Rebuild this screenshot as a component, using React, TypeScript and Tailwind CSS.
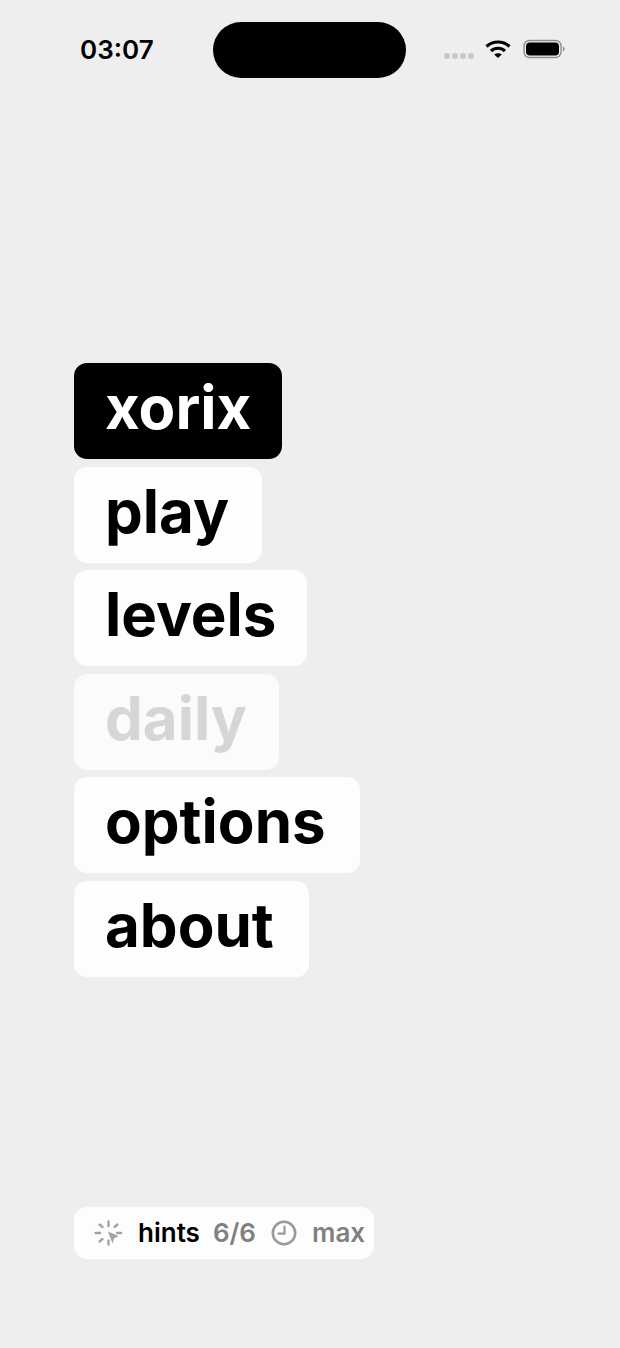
import React from 'react';

const items = [
  { label: 'xorix', width: 'w-[208px]', box: 'bg-black', text: 'text-white' },
  { label: 'play', width: 'w-[188px]', box: 'bg-[#fdfdfd]', text: 'text-black' },
  { label: 'levels', width: 'w-[233px]', box: 'bg-[#fdfdfd]', text: 'text-black' },
  { label: 'daily', width: 'w-[205px]', box: 'bg-[#fbfbfb]', text: 'text-[#d6d6d6]' },
  { label: 'options', width: 'w-[286px]', box: 'bg-[#fdfdfd]', text: 'text-black' },
  { label: 'about', width: 'w-[235px]', box: 'bg-[#fdfdfd]', text: 'text-black' },
];

const Wifi = () => (
  <svg width="26" height="20" viewBox="0 0 26 20" fill="none" stroke="#000" strokeWidth="3.2">
    <path d="M1.5 7.5C8 1.5 18 1.5 24.5 7.5" />
    <path d="M6 12C10 8.3 16 8.3 20 12" />
    <path d="M9.2 15.6L13 19L16.8 15.6C14.6 13.8 11.4 13.8 9.2 15.6Z" fill="#000" stroke="none" />
  </svg>
);

const Battery = () => (
  <svg width="42" height="20" viewBox="0 0 42 20" fill="none">
    <rect x="1" y="1.5" width="37" height="17" rx="5.5" stroke="#8e8e8e" strokeWidth="1.4" />
    <rect x="3" y="3.5" width="33" height="13" rx="3.8" fill="#000" />
    <path d="M39.8 7.5C41 8 41.6 9 41.6 10C41.6 11 41 12 39.8 12.5Z" fill="#8e8e8e" />
  </svg>
);

// hint icon, rays around a cursor arrow
const HintIcon = () => (
  <svg width="29" height="28" viewBox="0 0 29 28" fill="none" stroke="#a3a3a3" strokeWidth="2.4" strokeLinecap="round">
    <path d="M14.5 2.5V7" />
    <path d="M5.5 5.5L8.5 8" />
    <path d="M23.5 5.5L20.5 8" />
    <path d="M1.5 14H6" />
    <path d="M23 14H27" />
    <path d="M5.5 22.5L8.5 20" />
    <path d="M14.5 21.5V25.5" />
    <path d="M14 12.5L24.5 17L20 19.5L18.5 24.5Z" fill="#a3a3a3" stroke="none" />
  </svg>
);

const ClockIcon = () => (
  <svg width="26" height="26" viewBox="0 0 26 26" fill="none" stroke="#999" strokeWidth="2.6" strokeLinecap="round" strokeLinejoin="round">
    <circle cx="13" cy="13" r="11.2" />
    <path d="M13.5 6.5V13.6H7.5" strokeWidth="2.2" />
  </svg>
);

export default function App() {
  return (
    <div className="w-[620px] h-[1348px] bg-[#eeeeee] flex flex-col font-['Inter',sans-serif]">
      {/* status bar */}
      <div className="h-[363px] shrink-0 pt-[22px] pl-[80px] pr-[55px]">
        <div className="flex items-start">
          <span className="w-[133px] mt-[12px] text-[26px] leading-[32px] font-semibold text-black">03:07</span>
          <div className="w-[194px] h-[56px] rounded-full bg-black"></div>
          <div className="flex items-center ml-[38px] mt-[17px]">
            <div className="flex gap-[2px] mt-[14px]">
              <span className="w-[6px] h-[6px] rounded-full bg-[#c8c8c8]"></span>
              <span className="w-[6px] h-[6px] rounded-full bg-[#c8c8c8]"></span>
              <span className="w-[6px] h-[6px] rounded-full bg-[#c8c8c8]"></span>
              <span className="w-[6px] h-[6px] rounded-full bg-[#c8c8c8]"></span>
            </div>
            <div className="ml-[11px] mr-[12px]"><Wifi /></div>
            <Battery />
          </div>
        </div>
      </div>

      {/* menu */}
      <div className="pl-[74px] flex flex-col gap-[7.5px]">
        {items.map((item) => (
          <div key={item.label} className={`${item.width} ${item.box} ${item.text} h-[96px] rounded-[13px] pl-[31px] text-[60px] leading-[88px] font-bold`}>
            {item.label}
          </div>
        ))}
      </div>

      {/* hints */}
      <div className="ml-[74px] mt-[230px] w-[300px] h-[52px] rounded-[13px] bg-[#fdfdfd] flex items-center pl-[20px] text-[26px] font-semibold">
        <HintIcon />
        <span className="ml-[15px] text-black">hints</span>
        <span className="ml-[13px] text-[#808080]">6/6</span>
        <span className="ml-[15px]"><ClockIcon /></span>
        <span className="ml-[15px] text-[#808080]">max</span>
      </div>
    </div>
  );
}
